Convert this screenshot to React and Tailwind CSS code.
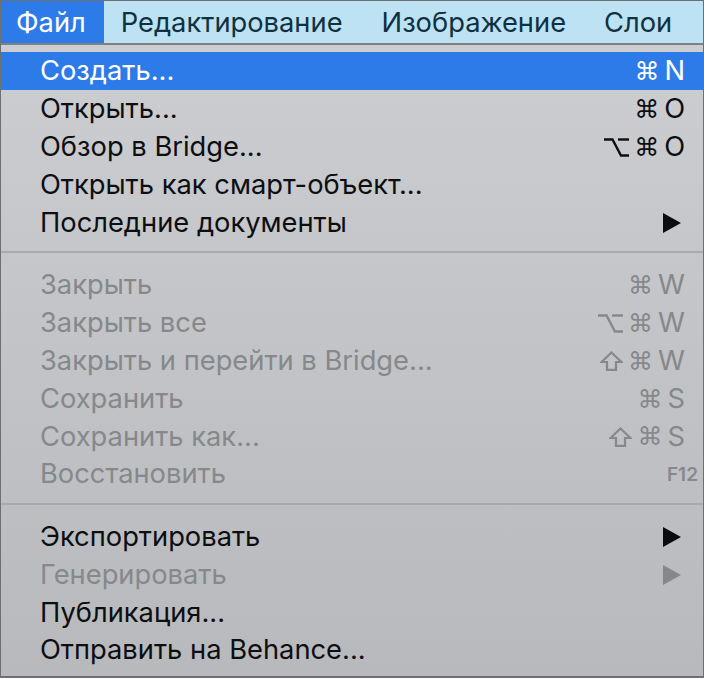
import React from "react";

const Tri = ({ disabled }) => (
  <svg width="18" height="20" viewBox="0 0 18 20" className="block">
    <polygon points="0,0 18,10 0,20" fill={disabled ? "#85878a" : "#0b0c0e"} />
  </svg>
);

const Opt = () => (
  <svg width="25" height="19" viewBox="0 0 25 19" className="block shrink-0" fill="none" stroke="currentColor" strokeWidth="2.4">
    <path d="M0 1.5 H8.5 L17 17.5 H25" />
    <path d="M14 1.5 H25" />
  </svg>
);

const Shift = () => (
  <svg width="23" height="20" viewBox="0 0 23 20" className="block shrink-0" fill="none" stroke="currentColor" strokeWidth="2.2" strokeLinejoin="miter">
    <path d="M11.5 1.5 L21.5 11 H16 V18.8 H7 V11 H1.5 Z" />
  </svg>
);

const Key = ({ k }) => {
  if (k === "⌥") return <Opt />;
  if (k === "⇧") return <Shift />;
  if (k === "⌘") return <span className="font-['DejaVu_Sans'] text-[25px] leading-none">⌘</span>;
  if (k === "F12") return <span className="text-[19px] font-semibold mr-[-13px]">F12</span>;
  return <span>{k}</span>;
};

const Row = ({ label, sc, sub, disabled, active }) => {
  const color = active ? "text-white" : disabled ? "text-[#86888b]" : "text-[#0d0e10]";
  return (
    <div
      className={`flex items-center h-[37.9px] pl-[39px] pr-[18px] pt-[1px] ${color} ${
        active ? "bg-[#2d7be8]" : ""
      }`}
    >
      <span className="flex-1 whitespace-nowrap">{label}</span>
      {sc && (
        <span className="flex items-center gap-[5px] whitespace-nowrap">
          {sc.map((k, i) => (
            <Key key={i} k={k} />
          ))}
        </span>
      )}
      {sub && (
        <span className="pr-[4px]">
          <Tri disabled={disabled} />
        </span>
      )}
    </div>
  );
};

const Sep = () => (
  <div className="pt-[10px] pb-[12.5px]">
    <div className="h-[2px] bg-[#a8aaad]" />
  </div>
);

export default function App() {
  return (
    <div className="w-[704px] h-[678px] overflow-hidden bg-[#6e6f71] p-[1px] pb-[2px] font-['Inter','Liberation_Sans',sans-serif] text-[27.3px]">
      <div className="flex flex-col h-full bg-gradient-to-b from-[#cdcfd2] to-[#b7b9bc]">
        <div className="flex h-[44px] bg-[#bde2f4] text-[#10313f] border-b-2 border-[#7f8082] items-stretch">
          <div className="flex items-center bg-[#2d7be8] text-white pl-[15px] pr-[18px] pt-[3px]">Файл</div>
          <div className="flex items-center pl-[17px] pt-[3px]">Редактирование</div>
          <div className="flex items-center pl-[39px] pt-[3px]">Изображение</div>
          <div className="flex items-center pl-[38px] pt-[3px]">Слои</div>
        </div>
        <div className="pt-[7px]">
          <Row label="Создать..." sc={["⌘", "N"]} active />
          <Row label="Открыть..." sc={["⌘", "O"]} />
          <Row label="Обзор в Bridge..." sc={["⌥", "⌘", "O"]} />
          <Row label="Открыть как смарт-объект..." />
          <Row label="Последние документы" sub />
          <Sep />
          <Row label="Закрыть" sc={["⌘", "W"]} disabled />
          <Row label="Закрыть все" sc={["⌥", "⌘", "W"]} disabled />
          <Row label="Закрыть и перейти в Bridge..." sc={["⇧", "⌘", "W"]} disabled />
          <Row label="Сохранить" sc={["⌘", "S"]} disabled />
          <Row label="Сохранить как..." sc={["⇧", "⌘", "S"]} disabled />
          <Row label="Восстановить" sc={["F12"]} disabled />
          <Sep />
          <Row label="Экспортировать" sub />
          <Row label="Генерировать" sub disabled />
          <Row label="Публикация..." />
          <Row label="Отправить на Behance..." />
        </div>
      </div>
    </div>
  );
}
